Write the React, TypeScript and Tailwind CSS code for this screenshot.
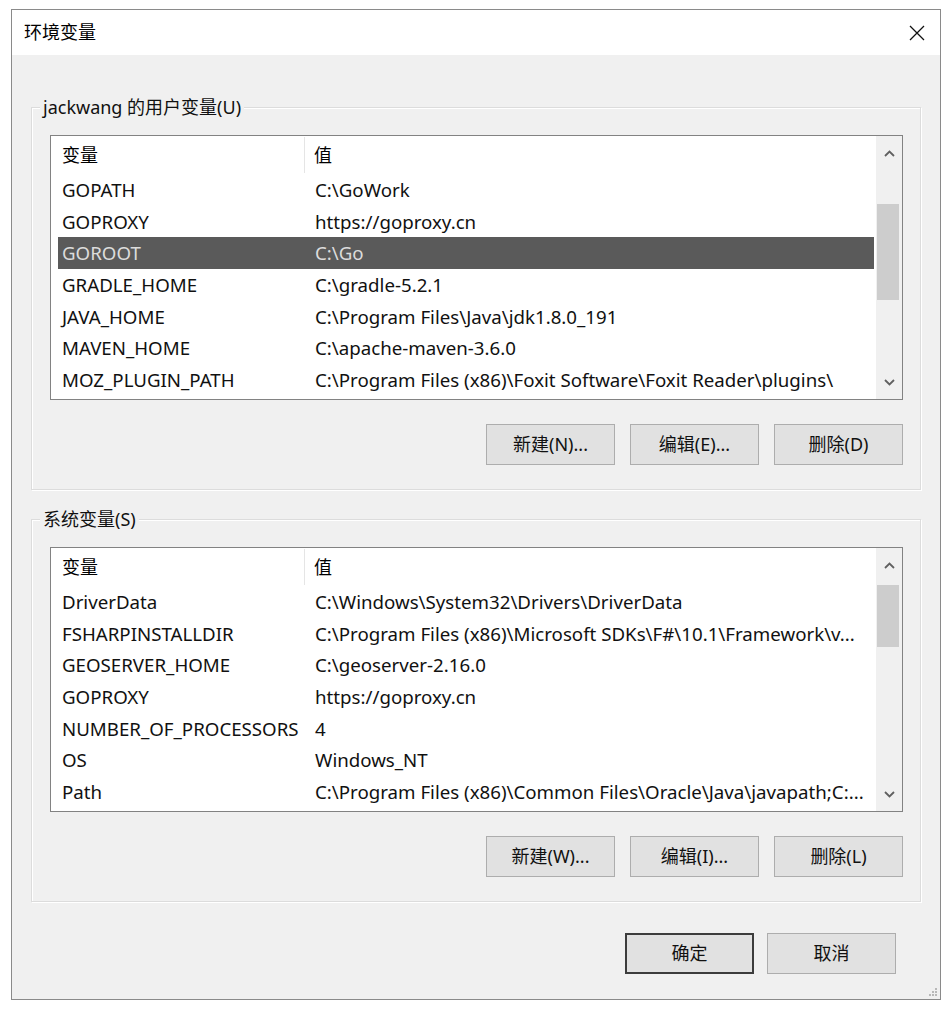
import React from 'react';

const FONT = { fontFamily: '"Noto Sans", "Noto Sans CJK SC", sans-serif' };

type Row = [string, string];

const userVars: Row[] = [
  ['GOPATH', 'C:\\GoWork'],
  ['GOPROXY', 'https://goproxy.cn'],
  ['GOROOT', 'C:\\Go'],
  ['GRADLE_HOME', 'C:\\gradle-5.2.1'],
  ['JAVA_HOME', 'C:\\Program Files\\Java\\jdk1.8.0_191'],
  ['MAVEN_HOME', 'C:\\apache-maven-3.6.0'],
  ['MOZ_PLUGIN_PATH', 'C:\\Program Files (x86)\\Foxit Software\\Foxit Reader\\plugins\\'],
];

const sysVars: Row[] = [
  ['DriverData', 'C:\\Windows\\System32\\Drivers\\DriverData'],
  ['FSHARPINSTALLDIR', 'C:\\Program Files (x86)\\Microsoft SDKs\\F#\\10.1\\Framework\\v...'],
  ['GEOSERVER_HOME', 'C:\\geoserver-2.16.0'],
  ['GOPROXY', 'https://goproxy.cn'],
  ['NUMBER_OF_PROCESSORS', '4'],
  ['OS', 'Windows_NT'],
  ['Path', 'C:\\Program Files (x86)\\Common Files\\Oracle\\Java\\javapath;C:...'],
];

function Chevron({ down }: { down?: boolean }) {
  return (
    <svg width="11" height="7" viewBox="0 0 11 7">
      <polyline
        points={down ? '1,1 5.5,5.5 10,1' : '1,6 5.5,1.5 10,6'}
        fill="none"
        stroke="#606060"
        strokeWidth="1.8"
      />
    </svg>
  );
}

function Scrollbar({ gap, thumb }: { gap: number; thumb: number }) {
  return (
    <div className="flex w-[26px] flex-col bg-[#f0f0f0]">
      <div className="flex h-[34px] items-center justify-center">
        <Chevron />
      </div>
      <div style={{ height: gap }} />
      <div className="mx-[1px] w-[22px] bg-[#cdcdcd]" style={{ height: thumb }} />
      <div className="flex-1" />
      <div className="flex h-[34px] items-center justify-center">
        <Chevron down />
      </div>
    </div>
  );
}

function VarList({ rows, selected, gap, thumb }: { rows: Row[]; selected?: number; gap: number; thumb: number }) {
  return (
    <div className="flex h-[265px] border border-[#828282] bg-white text-[18.7px]">
      <div className="flex flex-1 flex-col overflow-hidden pl-[7px] pr-[2px]">
        <div className="flex h-[38px] shrink-0 items-center">
          <div className="flex h-[36px] w-[247px] items-center border-r border-[#e5e5e5] pl-[4px] text-[18px]">变量</div>
          <div className="pl-[9px] text-[18px]">值</div>
        </div>
        {rows.map(([name, value], i) => (
          <div
            key={name}
            className={`flex h-[31.7px] shrink-0 items-center whitespace-nowrap ${
              i === selected ? 'bg-[#5a5a5a] text-[#dcdcdc]' : 'text-[#111]'
            }`}
          >
            <div className="w-[247px] shrink-0 overflow-hidden pl-[4px]">{name}</div>
            <div className="flex-1 overflow-hidden pl-[10px]">{value}</div>
          </div>
        ))}
      </div>
      <Scrollbar gap={gap} thumb={thumb} />
    </div>
  );
}

function Button({ label, primary }: { label: string; primary?: boolean }) {
  return (
    <div
      className={`flex h-[41px] w-[129px] items-center justify-center bg-[#e1e1e1] text-[18px] text-[#111] ${
        primary ? 'border-2 border-[#3c3c3c]' : 'border border-[#adadad]'
      }`}
    >
      {label}
    </div>
  );
}

function Group({ title, children }: { title: string; children: React.ReactNode }) {
  return (
    <div className="relative border border-[#dcdcdc] pb-[24px] pl-[18px] pr-[17px] pt-[27px] shadow-[1px_1px_0_#ffffff,inset_1px_1px_0_#ffffff]">
      <div className="absolute left-[8px] top-[-13px] bg-[#f0f0f0] px-[3px] text-[18px] leading-[24px] text-[#111]">
        {title}
      </div>
      {children}
    </div>
  );
}

export default function App() {
  return (
    <div className="min-h-[1012px] bg-white pl-[11px] pt-[9px] text-[18px]" style={FONT}>
      <div className="flex h-[991px] w-[930px] flex-col border border-[#8a8a8a] bg-[#f0f0f0]">
        <div className="flex h-[45px] items-center justify-between bg-white pl-[12px] pr-[15px] text-[18px] text-black">
          <span>环境变量</span>
          <svg width="16" height="16" viewBox="0 0 16 16">
            <path d="M1 1 L15 15 M15 1 L1 15" stroke="#111" strokeWidth="1.3" />
          </svg>
        </div>

        <div className="flex flex-1 flex-col px-[19px] pt-[52px]">
          <Group title="jackwang 的用户变量(U)">
            <VarList rows={userVars} selected={2} gap={34} thumb={96} />
            <div className="mt-[24px] flex justify-end gap-[15px]">
              <Button label="新建(N)..." />
              <Button label="编辑(E)..." />
              <Button label="删除(D)" />
            </div>
          </Group>

          <div className="h-[29px]" />

          <Group title="系统变量(S)">
            <VarList rows={sysVars} gap={3} thumb={62} />
            <div className="mt-[24px] flex justify-end gap-[15px]">
              <Button label="新建(W)..." />
              <Button label="编辑(I)..." />
              <Button label="删除(L)" />
            </div>
          </Group>

          <div className="mt-[31px] flex justify-end gap-[13px] pr-[25px]">
            <Button label="确定" primary />
            <Button label="取消" />
          </div>

          <div className="flex flex-1 items-end justify-end pb-[2px]">
            <svg width="12" height="12" viewBox="0 0 12 12" className="mr-[-17px]">
              {[
                [9, 3],
                [6, 6],
                [9, 6],
                [3, 9],
                [6, 9],
                [9, 9],
              ].map(([x, y]) => (
                <rect key={`${x}-${y}`} x={x} y={y} width="2" height="2" fill="#b8b8b8" />
              ))}
            </svg>
          </div>
        </div>
      </div>
    </div>
  );
}
